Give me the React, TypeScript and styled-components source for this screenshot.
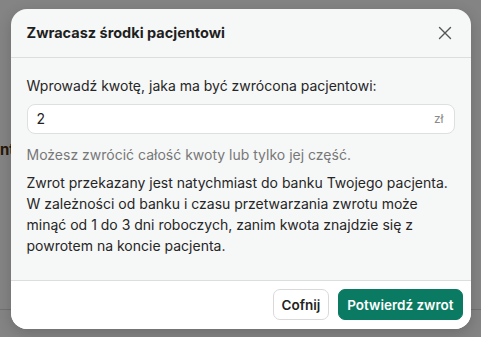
import React, { useState } from "react";
import styled, { createGlobalStyle } from "styled-components";

const GlobalStyle = createGlobalStyle`
  html, body {
    margin: 0;
    padding: 0;
    width: 481px;
    height: 337px;
    overflow: hidden;
    font-family: Inter, "Noto Sans", "Liberation Sans", sans-serif;
  }
`;

// ---------- page behind the dialog ----------
const Page = styled.div`
  position: relative;
  width: 481px;
  height: 337px;
  background: #fdfdfd;
  overflow: hidden;
`;

const PageWord = styled.div`
  position: absolute;
  top: 140px;
  left: 0;
  font-size: 15px;
  font-weight: 700;
  color: #4a2e14;
`;

const PageRule = styled.div<{ $top: number }>`
  position: absolute;
  left: 0;
  right: 0;
  top: ${(p) => p.$top}px;
  height: 1px;
  background: #d8d8d8;
`;

const Backdrop = styled.div`
  position: absolute;
  inset: 0;
  background: rgba(0, 0, 0, 0.48);
  display: flex;
  align-items: center;
  justify-content: center;
`;

// ---------- dialog ----------
const Dialog = styled.div`
  width: 460px;
  border-radius: 16px;
  background: #f6f7f7;
  overflow: hidden;
  box-shadow: 0 4px 14px rgba(0, 0, 0, 0.18);
  color: #222;
`;

const Header = styled.div`
  height: 48px;
  padding: 0 16px;
  display: flex;
  align-items: center;
  justify-content: space-between;
  border-bottom: 1px solid #dcdddd;
`;

const Title = styled.h2`
  margin: 0;
  font-size: 14.5px;
  font-weight: 700;
  color: #1f1f1f;
`;

const CloseButton = styled.button`
  border: 0;
  background: none;
  padding: 0;
  width: 20px;
  height: 20px;
  display: flex;
  align-items: center;
  justify-content: center;
  cursor: pointer;
  color: #555;
`;

const Body = styled.div`
  padding: 17px 16px 24px;
  font-size: 14px;
  line-height: 21px;
`;

const Label = styled.label`
  display: block;
  color: #262626;
`;

const InputWrap = styled.div`
  margin-top: 8px;
  height: 30px;
  box-sizing: border-box;
  border: 1px solid #dedfdf;
  border-radius: 8px;
  background: #fff;
  display: flex;
  align-items: center;
  padding: 0 10px 0 9px;
`;

const AmountInput = styled.input`
  flex: 1;
  border: 0;
  outline: none;
  background: transparent;
  font: inherit;
  font-size: 14px;
  color: #222;
  padding: 0;
`;

const Currency = styled.span`
  font-size: 12px;
  color: #8a8a8a;
`;

const Hint = styled.p`
  margin: 10px 0 0;
  color: #777;
`;

const Info = styled.p`
  margin: 7px 0 0;
  color: #262626;
`;

const Footer = styled.div`
  height: 48px;
  background: #fff;
  border-top: 1px solid #dcdddd;
  display: flex;
  align-items: center;
  justify-content: flex-end;
  gap: 9px;
  padding: 0 8px;
`;

const Button = styled.button<{ $primary?: boolean }>`
  height: 31px;
  padding: 0 8px;
  border-radius: 7px;
  font-family: inherit;
  font-size: 13.5px;
  font-weight: 600;
  cursor: pointer;
  border: 1px solid ${(p) => (p.$primary ? "#0b7a62" : "#d9d9d9")};
  background: ${(p) => (p.$primary ? "#0b7a62" : "#fff")};
  color: ${(p) => (p.$primary ? "#fff" : "#222")};
`;

const App: React.FC = () => {
  const [amount, setAmount] = useState("2");

  return (
    <>
      <GlobalStyle />
      <Page>
        <PageWord>nt</PageWord>
        <PageRule $top={309} />
        <Backdrop>
          <Dialog>
            <Header>
              <Title>Zwracasz środki pacjentowi</Title>
              <CloseButton aria-label="Zamknij">
                <svg width="14" height="14" viewBox="0 0 14 14">
                  <path d="M1.5 1.5 L12.5 12.5 M12.5 1.5 L1.5 12.5" stroke="currentColor" strokeWidth="1.4" strokeLinecap="round" />
                </svg>
              </CloseButton>
            </Header>
            <Body>
              <Label>Wprowadź kwotę, jaka ma być zwrócona pacjentowi:</Label>
              <InputWrap>
                <AmountInput value={amount} onChange={(e) => setAmount(e.target.value)} />
                <Currency>zł</Currency>
              </InputWrap>
              <Hint>Możesz zwrócić całość kwoty lub tylko jej część.</Hint>
              <Info>
                Zwrot przekazany jest natychmiast do banku Twojego pacjenta. W zależności od banku i
                czasu przetwarzania zwrotu może minąć od 1 do 3 dni roboczych, zanim kwota znajdzie
                się z powrotem na koncie pacjenta.
              </Info>
            </Body>
            <Footer>
              <Button>Cofnij</Button>
              <Button $primary>Potwierdź zwrot</Button>
            </Footer>
          </Dialog>
        </Backdrop>
      </Page>
    </>
  );
};

export default App;
